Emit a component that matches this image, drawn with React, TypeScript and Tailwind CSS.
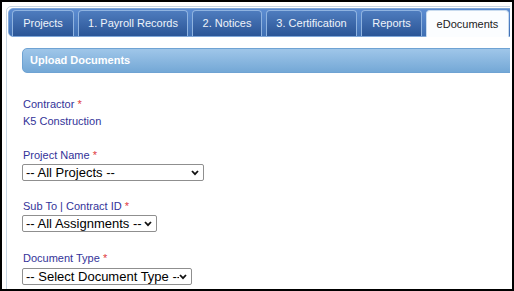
const tabs = [
  { label: 'Projects', w: 'w-[62px]' },
  { label: '1. Payroll Records', w: 'w-[110px]' },
  { label: '2. Notices', w: 'w-[70px]' },
  { label: '3. Certification', w: 'w-[91px]' },
  { label: 'Reports', w: 'w-[61px]' },
  { label: 'eDocuments', w: 'w-[83px]' },
];

function Req() {
  return <span className="text-[#e0393e]"> *</span>;
}

function Label({ text, className = '' }: { text: string; className?: string }) {
  return (
    <div className={`h-[13px] leading-[13px] text-[11px] text-[#333399] ${className}`}>
      {text}
      <Req />
    </div>
  );
}

function Select({ value, width, className = '' }: { value: string; width: string; className?: string }) {
  return (
    <div className={`relative ${width} ${className}`}>
      <select
        className="block w-full h-[17px] appearance-none border border-[#8f8f8f] rounded-[2px] bg-white pl-[3px] pr-[12px] text-[13px] leading-[15px] text-black"
        style={{ fontFamily: '"Liberation Sans", Arial, sans-serif' }}
        defaultValue={value}
      >
        <option>{value}</option>
      </select>
      <svg
        className="pointer-events-none absolute right-[5px] top-[6px]"
        width="8"
        height="6"
        viewBox="0 0 8 6"
      >
        <path d="M1 1 L4 4.2 L7 1" fill="none" stroke="#111" strokeWidth="1.8" />
      </svg>
    </div>
  );
}

export default function App() {
  return (
    <div
      className="w-[514px] h-[291px] border-2 border-black bg-white pt-[4px] pl-[4px] pr-[2px] overflow-hidden"
      style={{ fontFamily: '"Liberation Sans", Arial, sans-serif' }}
    >
      <div className="h-full overflow-hidden">
        <div className="w-[530px] h-[300px] border border-[#c8d6e4] rounded-[5px] p-px">
          <div className="h-[29px] flex items-end gap-[4px] pl-[3px] rounded-[5px] border border-[#7ea6d8] bg-gradient-to-b from-[#5d8dd2] to-[#3f6fb3]">
            {tabs.map((t) =>
              t.label === 'eDocuments' ? (
                <div
                  key={t.label}
                  className={`${t.w} h-[27px] -mb-px flex items-center justify-center rounded-t-[4px] border border-b-0 border-[#c9dbee] bg-[#fbfdff] text-[11px] text-[#222]`}
                >
                  {t.label}
                </div>
              ) : (
                <div
                  key={t.label}
                  className={`${t.w} h-[26px] flex items-center justify-center rounded-t-[4px] border border-b-0 border-[#8fb3e0] bg-gradient-to-b from-[#4e7cbe] to-[#2b5596] text-[11px] text-[#eef3fa]`}
                >
                  {t.label}
                </div>
              )
            )}
          </div>

          <div className="pl-[14px] pt-[11px]">
            <div className="h-[25px] flex items-center pl-[7px] rounded-[5px] border border-[#6fa3d3] bg-gradient-to-b from-[#9fc6e9] to-[#74a8d6] text-[11px] font-bold text-white">
              Upload Documents
            </div>

            <div className="pl-[1px]">
              <Label text="Contractor" className="mt-[25px]" />
              <div className="h-[13px] leading-[13px] text-[11px] text-[#333399] mt-[4px]">K5 Construction</div>

              <Label text="Project Name" className="mt-[21px]" />
              <Select value="-- All Projects --" width="w-[182px]" className="mt-[2px] -ml-px" />

              <Label text="Sub To | Contract ID" className="mt-[19px]" />
              <Select value="-- All Assignments --" width="w-[135px]" className="mt-[2px] -ml-px" />

              <Label text="Document Type" className="mt-[20px]" />
              <Select value="-- Select Document Type --" width="w-[170px]" className="mt-[3px] -ml-px" />
            </div>
          </div>
        </div>
      </div>
    </div>
  );
}
